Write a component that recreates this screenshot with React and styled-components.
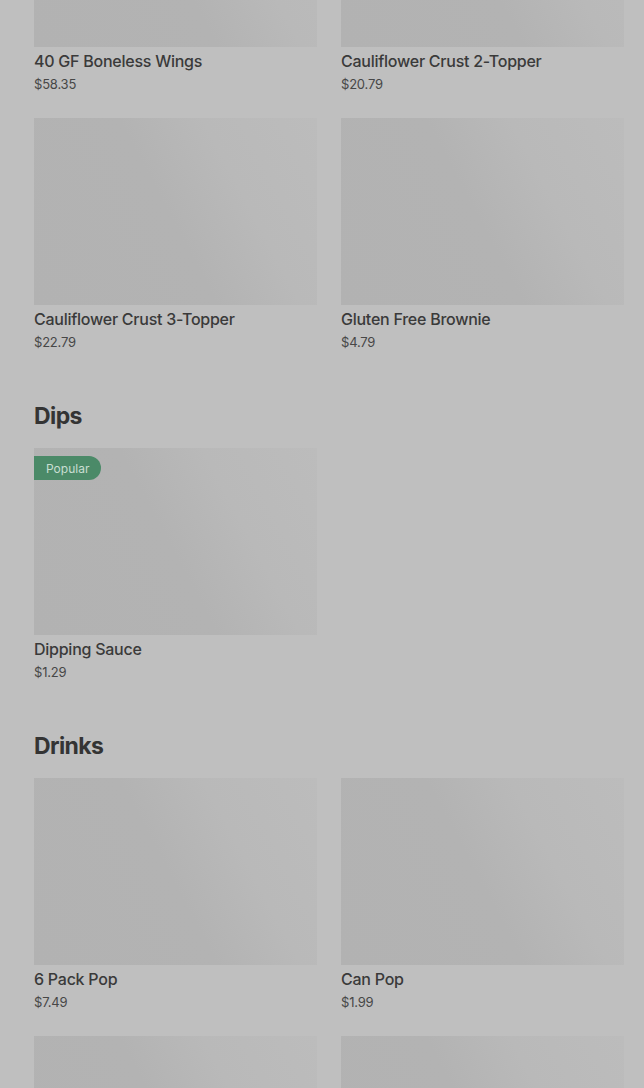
import styled, { createGlobalStyle } from "styled-components";

const GlobalStyle = createGlobalStyle`
  html, body {
    margin: 0;
    padding: 0;
    background: #bfbfbf;
    font-family: Inter, "Noto Sans", sans-serif;
    overflow: hidden;
  }
`;

const Page = styled.div`
  width: 644px;
  height: 1088px;
  overflow: hidden;
  background: #bfbfbf;
`;

const Menu = styled.div`
  margin-top: -140px;
  padding: 0 20px 0 34px;
  display: flex;
  flex-direction: column;
`;

const Section = styled.section`
  display: flex;
  flex-direction: column;
  margin-bottom: 48px;
`;

const Heading = styled.h2`
  margin: 1px 0 16px;
  font-size: 23px;
  line-height: 32px;
  font-weight: 700;
  letter-spacing: -0.6px;
  color: #343434;
`;

const Grid = styled.div`
  display: grid;
  grid-template-columns: 283px 283px;
  column-gap: 24px;
  row-gap: 25px;
`;

const Card = styled.div`
  display: flex;
  flex-direction: column;
`;

const Thumb = styled.div`
  position: relative;
  height: 187px;
  background: linear-gradient(62deg, #b2b2b2 0%, #b3b3b3 48%, #b9b9b9 70%, #bcbcbc 100%);
`;

const Badge = styled.span`
  position: absolute;
  top: 8px;
  left: 0;
  height: 24px;
  padding: 0 12px;
  display: flex;
  align-items: center;
  background: #4b8a68;
  color: #c9ded2;
  font-size: 12px;
  border-radius: 0 12px 12px 0;
`;

const Name = styled.div`
  margin-top: 4px;
  font-size: 16px;
  line-height: 20px;
  font-weight: 500;
  letter-spacing: -0.25px;
  color: #3a3a3a;
`;

const Price = styled.div`
  margin-top: 4px;
  font-size: 13px;
  line-height: 18px;
  letter-spacing: -0.2px;
  color: #474747;
`;

const sections = [
  {
    title: null,
    items: [
      { name: "40 GF Boneless Wings", price: "$58.35" },
      { name: "Cauliflower Crust 2-Topper", price: "$20.79" },
      { name: "Cauliflower Crust 3-Topper", price: "$22.79" },
      { name: "Gluten Free Brownie", price: "$4.79" },
    ],
  },
  {
    title: "Dips",
    items: [{ name: "Dipping Sauce", price: "$1.29", popular: true }],
  },
  {
    title: "Drinks",
    items: [
      { name: "6 Pack Pop", price: "$7.49" },
      { name: "Can Pop", price: "$1.99" },
      { id: "more-1" },
      { id: "more-2" },
    ],
  },
];

export default function App() {
  return (
    <Page>
      <GlobalStyle />
      <Menu>
        {sections.map((s, i) => (
          <Section key={i}>
            {s.title && <Heading>{s.title}</Heading>}
            <Grid>
              {s.items.map((it) => (
                <Card key={it.name || it.id}>
                  <Thumb>{it.popular && <Badge>Popular</Badge>}</Thumb>
                  {it.name && <Name>{it.name}</Name>}
                  {it.price && <Price>{it.price}</Price>}
                </Card>
              ))}
            </Grid>
          </Section>
        ))}
      </Menu>
    </Page>
  );
}
